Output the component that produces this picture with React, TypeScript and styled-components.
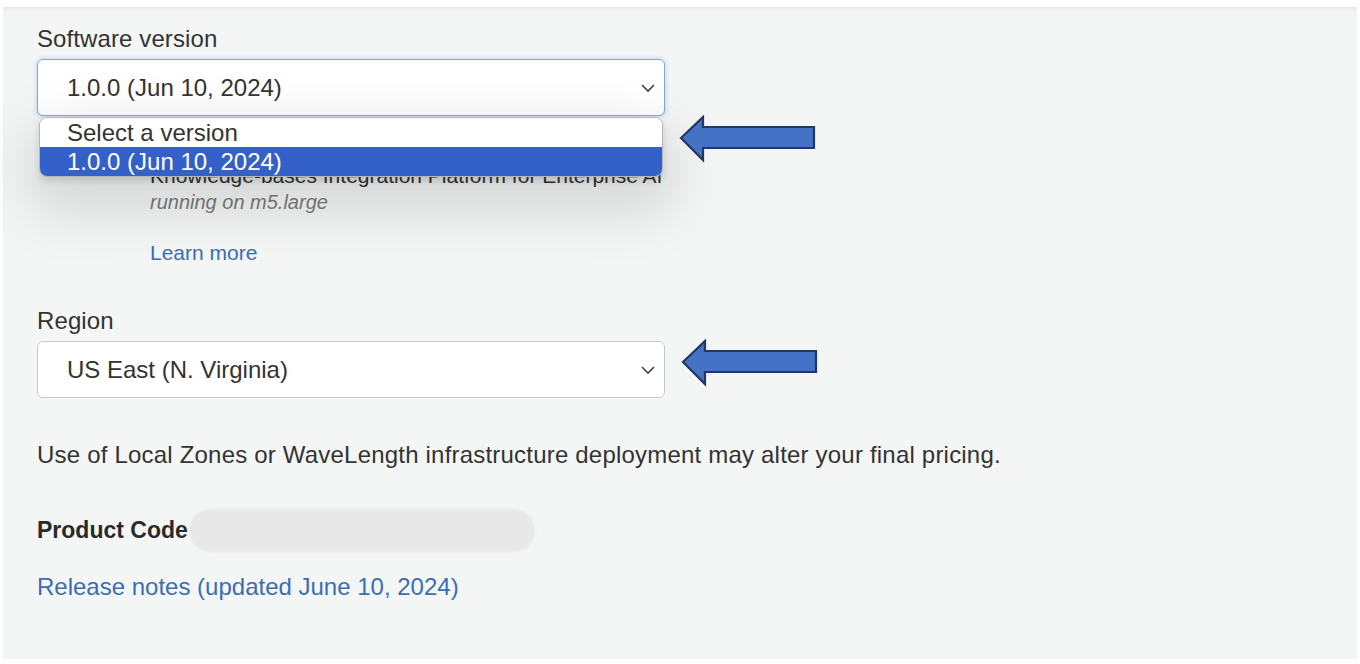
import React from "react";
import styled, { createGlobalStyle } from "styled-components";

const Global = createGlobalStyle`
  html, body { margin: 0; padding: 0; background: #ffffff; }
  body { font-family: "Liberation Sans", Arial, sans-serif; color: #333333; }
  * { box-sizing: border-box; }
`;

const Page = styled.div`
  width: 1360px;
  height: 664px;
  padding: 7px 3px 5px 3px;
  position: relative;
  overflow: hidden;
`;

const Panel = styled.div`
  height: 100%;
  background: #f4f6f6;
  box-shadow: inset 0 3px 4px -2px rgba(0, 0, 0, 0.08);
  padding: 19px 0 0 34px;
  display: flex;
  flex-direction: column;
`;

const Field = styled.div`
  width: 628px;
  display: flex;
  flex-direction: column;
  gap: 7px;
`;

const Label = styled.div`
  font-size: 24px;
  line-height: 26px;
  letter-spacing: 0.1px;
  color: #333333;
`;

const SelectWrap = styled.div`
  position: relative;
`;

const SelectBox = styled.div<{ $focused?: boolean }>`
  height: 57px;
  background: #ffffff;
  border: 1px solid ${(p) => (p.$focused ? "#7fa8e4" : "#c6c9cc")};
  border-radius: 6px;
  box-shadow: ${(p) =>
    p.$focused ? "0 0 4px 1px rgba(120, 160, 230, 0.35)" : "none"};
  display: flex;
  align-items: center;
  justify-content: space-between;
  padding: 0 8px 0 29px;
  font-size: 24px;
  color: #333333;
`;

const Chevron = () => (
  <svg width="16" height="10" viewBox="0 0 16 10">
    <path d="M2 2 L8 8 L14 2" fill="none" stroke="#444" strokeWidth="1.6" />
  </svg>
);

const ListBox = styled.div`
  position: absolute;
  top: 58px;
  left: 2px;
  right: 2px;
  background: #ffffff;
  border: 1px solid #b5b8bb;
  border-radius: 8px;
  overflow: hidden;
  box-shadow: 0 4px 6px rgba(0, 0, 0, 0.12), 0 22px 55px 12px rgba(0, 0, 0, 0.13);
  z-index: 2;
`;

const Option = styled.div<{ $selected?: boolean }>`
  height: 29px;
  line-height: 29px;
  padding-left: 27px;
  font-size: 24px;
  background: ${(p) => (p.$selected ? "#3461c9" : "#ffffff")};
  color: ${(p) => (p.$selected ? "#ffffff" : "#333333")};
`;

const Product = styled.div`
  margin: 47px 0 0 113px;
  display: flex;
  flex-direction: column;
`;

const ProductTitle = styled.div`
  font-size: 21px;
  line-height: 26px;
  color: #333333;
  white-space: nowrap;
  width: 513px;
  overflow: hidden;
`;

const ProductSub = styled.div`
  font-size: 20px;
  line-height: 26px;
  font-style: italic;
  color: #7a7a7a;
`;

const Link = styled.a`
  font-size: 21px;
  line-height: 26px;
  color: #3b6db5;
  text-decoration: none;
`;

const LearnMore = styled(Link)`
  margin-top: 25px;
  align-self: flex-start;
`;

const RegionField = styled(Field)`
  margin-top: 42px;
`;

const Note = styled.p`
  margin: 44px 0 0 0;
  font-size: 24px;
  line-height: 26px;
  letter-spacing: 0.2px;
  color: #333333;
`;

const CodeRow = styled.div`
  margin-top: 40px;
  display: flex;
  align-items: center;
  height: 44px;
`;

const CodeLabel = styled.span`
  font-size: 23px;
  font-weight: bold;
  color: #2a2a2a;
`;

const Redacted = styled.span`
  display: inline-block;
  width: 346px;
  height: 43px;
  border-radius: 22px;
  background: #e8e8e8;
  filter: blur(1px);
  margin-left: 1px;
`;

const ReleaseLink = styled(Link)`
  margin-top: 22px;
  font-size: 24px;
  align-self: flex-start;
`;

const ArrowMark = styled.svg<{ $top: number; $left: number }>`
  position: absolute;
  top: ${(p) => p.$top}px;
  left: ${(p) => p.$left}px;
  z-index: 3;
`;

const Arrow = ({ top, left }: { top: number; left: number }) => (
  <ArrowMark $top={top} $left={left} width="140" height="50" viewBox="0 0 140 50">
    <polygon
      points="2,23 24,2 24,12 135,12 135,33 24,33 24,45"
      fill="#4472c4"
      stroke="#1f3864"
      strokeWidth="2.2"
      strokeLinejoin="miter"
    />
  </ArrowMark>
);

export default function App() {
  return (
    <Page>
      <Global />
      <Panel>
        <Field>
          <Label>Software version</Label>
          <SelectWrap>
            <SelectBox $focused>
              <span>1.0.0 (Jun 10, 2024)</span>
              <Chevron />
            </SelectBox>
            <ListBox>
              <Option>Select a version</Option>
              <Option $selected>1.0.0 (Jun 10, 2024)</Option>
            </ListBox>
          </SelectWrap>
        </Field>
        <Product>
          <ProductTitle>Knowledge-bases Integration Platform for Enterprise AI</ProductTitle>
          <ProductSub>running on m5.large</ProductSub>
          <LearnMore href="#">Learn more</LearnMore>
        </Product>
        <RegionField>
          <Label>Region</Label>
          <SelectBox>
            <span>US East (N. Virginia)</span>
            <Chevron />
          </SelectBox>
        </RegionField>
        <Note>Use of Local Zones or WaveLength infrastructure deployment may alter your final pricing.</Note>
        <CodeRow>
          <CodeLabel>Product Code</CodeLabel>
          <Redacted />
        </CodeRow>
        <ReleaseLink href="#">Release notes (updated June 10, 2024)</ReleaseLink>
      </Panel>
      <Arrow top={115} left={679} />
      <Arrow top={339} left={681} />
    </Page>
  );
}
